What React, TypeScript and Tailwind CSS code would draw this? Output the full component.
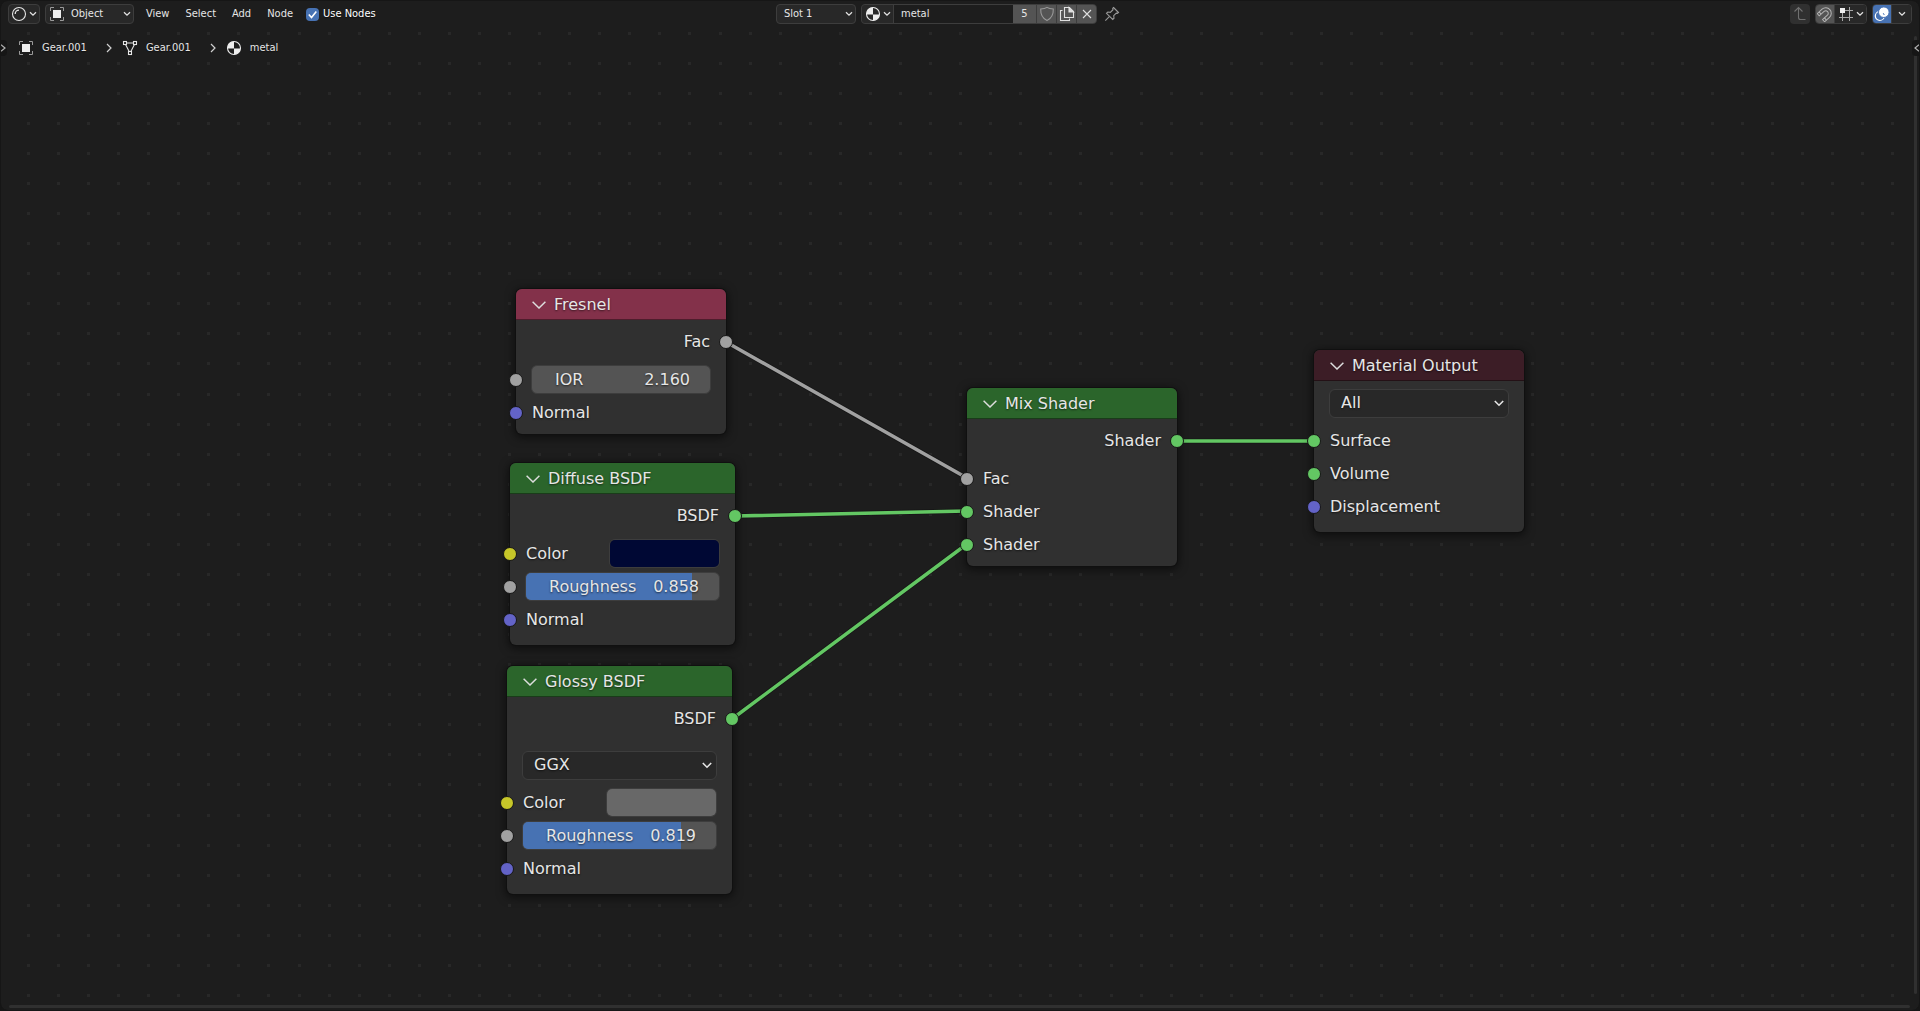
import { useState } from 'react';
import type { ReactNode } from 'react';

type SocketColor = 'gray' | 'green' | 'yellow' | 'blue';

const socketColors: Record<SocketColor, string> = {
  gray: 'bg-[#a1a1a1]',
  green: 'bg-[#63c763]',
  yellow: 'bg-[#c7c729]',
  blue: 'bg-[#6363c7]',
};

// Link endpoints in canvas space
const links = [
  { from: [726, 314], to: [967, 450], color: '#a1a1a1' },
  { from: [735, 488], to: [967, 483], color: '#63c763' },
  { from: [732, 691], to: [967, 516], color: '#63c763' },
  { from: [1177, 413], to: [1314, 413], color: '#63c763' },
];

// The grid step is not a whole number, so dots are snapped one by one
const GRID_STEP = 30.073;
const gridPath = (() => {
  let d = '';
  for (let row = 0; row < 72; row++) {
    for (let col = 0; col < 128; col++) {
      const x = Math.floor(27.38 + col * GRID_STEP);
      const y = Math.floor(4.16 + row * GRID_STEP);
      d += `M${x} ${y}h3v3h-3z`;
    }
  }
  return d;
})();

/* ---------- Icons ---------- */

function Chevron({ className = '' }: { className?: string }) {
  return (
    <svg viewBox="0 0 8 6" className={`h-[6px] w-2 shrink-0 ${className}`} fill="none" stroke="#e0e0e0" strokeWidth="1.3">
      <path d="M1 1.2l3 3 3-3" />
    </svg>
  );
}

function Crumb() {
  return (
    <svg viewBox="0 0 6 10" className="h-[10px] w-[6px] shrink-0" fill="none" stroke="#d0d0d0" strokeWidth="1.2">
      <path d="M1 1l4 4-4 4" />
    </svg>
  );
}

function ObjectIcon() {
  return (
    <svg viewBox="0 0 16 16" className="size-4 shrink-0" fill="none" stroke="#9a9a9a" strokeWidth="1">
      <path d="M1.5 5V1.5H5M11 1.5h3.500V5M14.500 11v3.500H11M5 14.500H1.500V11" />
      <rect x="4" y="4" width="8" height="8" fill="#eeeeee" stroke="none" />
    </svg>
  );
}

function ShaderEditorIcon() {
  return (
    <svg viewBox="0 0 16 16" className="size-4 shrink-0" fill="none" stroke="#e6e6e6">
      <circle cx="8" cy="8" r="6.500" strokeWidth="1.100" />
      <path d="M4.200 8A3.800 3.800 0 0 1 8 4.200" strokeWidth="1.300" />
    </svg>
  );
}

function MaterialIcon() {
  return (
    <svg viewBox="0 0 16 16" className="size-4 shrink-0">
      <circle cx="8" cy="8" r="6.500" fill="none" stroke="#eeeeee" strokeWidth="1.100" />
      <path d="M8 8.500V1.500A6.500 6.500 0 0 0 1.500 8.500z" fill="#eeeeee" />
      <path d="M8 8.500h6.500A6.500 6.500 0 0 1 8 14.500z" fill="#eeeeee" />
    </svg>
  );
}

function MeshIcon() {
  return (
    <svg viewBox="0 0 16 16" className="size-4 shrink-0" fill="none" stroke="#e6e6e6" strokeWidth="1.100">
      <path d="M4.500 3h7M3.700 4.800l3.300 6.400M12.300 4.800L9 11.200" />
      <rect x="1.500" y="1.500" width="3" height="3" />
      <rect x="11.500" y="1.500" width="3" height="3" />
      <rect x="6.500" y="11.500" width="3" height="3" />
    </svg>
  );
}

function ShieldIcon() {
  return (
    <svg viewBox="0 0 16 16" className="size-4 shrink-0" fill="none" stroke="#999999" strokeWidth="1.100">
      <path d="M8 1.400C6.500 2.500 4 3 1.700 3C1.500 8.500 3.500 12.300 8 14.600C12.500 12.300 14.500 8.500 14.300 3C12 3 9.500 2.500 8 1.400z" />
    </svg>
  );
}

function DuplicateIcon() {
  return (
    <svg viewBox="0 0 16 16" className="size-4 shrink-0" fill="none" stroke="#e0e0e0" strokeWidth="1.100">
      <path d="M5.500 1.500h5l4 4v6h-9z" />
      <path d="M10 1.500V6h4.500z" fill="#e0e0e0" />
      <path d="M3.500 4.500h-2v10h9v-2" />
    </svg>
  );
}

function CloseIcon() {
  return (
    <svg viewBox="0 0 16 16" className="size-4 shrink-0" fill="none" stroke="#e0e0e0" strokeWidth="1.100">
      <path d="M4 4l8 8M12 4l-8 8" />
    </svg>
  );
}

function PinIcon() {
  return (
    <svg viewBox="0 0 16 16" className="size-4 shrink-0" fill="none" stroke="#999999" strokeWidth="1.100">
      <path d="M9.500 1.500l5 5-1.200 .8-1-.2-2.600 2.600 .3 2.500-1.300 1.300-6.200-6.200 1.300-1.300 2.500 .3L9 3.700l-.3-1.200z" />
      <path d="M5.300 10.700L1.300 14.700" />
    </svg>
  );
}

function ParentIcon() {
  return (
    <svg viewBox="0 0 16 16" className="size-4 shrink-0" fill="none" stroke="#707070" strokeWidth="1.100">
      <path d="M2.500 5.500l4-4 4 4M6.500 1.500v10q0 2 2 2h5" />
    </svg>
  );
}

function MagnetIcon() {
  return (
    <svg viewBox="0 0 16 16" className="size-4 shrink-0" fill="none" stroke="#b5b5b5" strokeWidth="1">
      <g transform="rotate(48 8 8)">
        <path d="M2.500 13.500V7a5.500 5.500 0 0 1 11 0v6.500h-3V7a2.500 2.500 0 0 0-5 0v6.500z" />
        <path d="M2.500 11h3M10.500 11h3" />
      </g>
    </svg>
  );
}

function SnapGridIcon() {
  return (
    <svg viewBox="0 0 16 16" className="size-4 shrink-0" fill="none" stroke="#a8a8a8" strokeWidth="1">
      <path d="M4.500 7v8M11.500 1v14M7 4.500h8M1 11.500h14" />
      <rect x="2" y="2" width="5" height="5" fill="#eeeeee" stroke="none" />
    </svg>
  );
}

function OverlayIcon() {
  return (
    <svg viewBox="0 0 16 16" className="size-4 shrink-0">
      <circle cx="5.800" cy="10" r="4.500" fill="none" stroke="#ffffff" strokeWidth="1.200" />
      <circle cx="9.800" cy="6.200" r="5.300" fill="#ffffff" stroke="#4772b3" strokeWidth="1" />
      <path d="M9.200 7.200a4.500 4.500 0 0 1 1 1.800" fill="none" stroke="#4772b3" strokeWidth="1" />
    </svg>
  );
}

/* ---------- Node parts ---------- */

function Socket({ color, side = 'left' }: { color: SocketColor; side?: 'left' | 'right' }) {
  return (
    <span
      className={`absolute top-1/2 size-[14px] -translate-y-1/2 rounded-full border border-[#161616] ${
        side === 'left' ? '-left-[7px]' : '-right-[7px]'
      } ${socketColors[color]}`}
    />
  );
}

interface NodeProps {
  title: string;
  x: number;
  y: number;
  headerClass: string;
  className?: string;
  children: ReactNode;
}

function Node({ title, x, y, headerClass, className = '', children }: NodeProps) {
  return (
    <section
      style={{ left: x, top: y }}
      className={`absolute flex flex-col rounded-md bg-[#303030] text-base leading-5 text-[#e6e6e6] shadow-[0_0_0_1px_#101010,0_2px_8px_2px_rgba(0,0,0,0.5)] [text-shadow:0_1px_2px_rgba(0,0,0,0.6)] ${className}`}
    >
      <header className={`mb-[5px] flex h-[31px] items-center gap-2 rounded-t-md border-b border-black/40 pt-[2px] pl-4 ${headerClass}`}>
        <button type="button" aria-label={`Collapse ${title}`}>
          <svg viewBox="0 0 14 8" className="h-2 w-[14px]" fill="none" stroke="#dddddd" strokeWidth="1.500">
            <path d="M.6 .8L7 7 13.400 .8" />
          </svg>
        </button>
        <h2>{title}</h2>
      </header>
      {children}
    </section>
  );
}

function Output({ label, color }: { label: string; color: SocketColor }) {
  return (
    <div className="relative mb-1 flex h-[34px] items-center justify-end px-4">
      {label}
      <Socket color={color} side="right" />
    </div>
  );
}

function Input({ label, color }: { label: string; color: SocketColor }) {
  return (
    <div className="relative flex h-[33px] items-center px-4">
      <Socket color={color} />
      {label}
    </div>
  );
}

function NumberInput({ id, label, value }: { id: string; label: string; value: string }) {
  return (
    <div className="relative flex h-[33px] items-center px-[15px]">
      <Socket color="gray" />
      <div className="flex h-[29px] w-full items-center rounded-md border border-[#3d3d3d] bg-[#545454] pr-5 pl-[23px]">
        <label htmlFor={id}>{label}</label>
        <input id={id} defaultValue={value} className="w-0 flex-1 bg-transparent text-right outline-none [text-shadow:inherit]" />
      </div>
    </div>
  );
}

function SliderInput({ id, label, initial }: { id: string; label: string; initial: number }) {
  const [value, setValue] = useState(initial);

  return (
    <div className="relative flex h-[33px] items-center px-[15px]">
      <Socket color="gray" />
      <div className="relative h-[29px] w-full overflow-hidden rounded-md border border-[#3d3d3d] bg-[#545454]">
        <div className="h-full bg-[#4772b3]" style={{ width: `${value * 100}%` }} />
        <div className="absolute inset-0 flex items-center justify-between pr-5 pl-[23px]">
          <label htmlFor={id}>{label}</label>
          <output htmlFor={id}>{value.toFixed(3)}</output>
        </div>
        <input
          id={id}
          type="range"
          min={0}
          max={1}
          step={0.001}
          value={value}
          onChange={(e) => setValue(Number(e.target.value))}
          className="absolute inset-0 size-full opacity-0"
        />
      </div>
    </div>
  );
}

function ColorInput({ id, value }: { id: string; value: string }) {
  return (
    <div className="relative flex h-[33px] items-center justify-between pr-[15px] pl-4">
      <Socket color="yellow" />
      <label htmlFor={id}>Color</label>
      <input
        id={id}
        type="color"
        defaultValue={value}
        className="h-[29px] w-[111px] appearance-none overflow-hidden rounded-md border border-[#3d3d3d] bg-transparent p-0 [&::-webkit-color-swatch]:border-0 [&::-webkit-color-swatch-wrapper]:p-0"
      />
    </div>
  );
}

function NodeSelect({ label, options }: { label: string; options: string[] }) {
  return (
    <div className="relative mb-1 flex h-[34px] items-center px-[15px]">
      <select
        aria-label={label}
        className="h-[29px] w-full appearance-none rounded-md border border-[#3d3d3d] bg-[#282828] px-[11px] outline-none [text-shadow:inherit]"
      >
        {options.map((o) => (
          <option key={o}>{o}</option>
        ))}
      </select>
      <svg viewBox="0 0 10 7" className="pointer-events-none absolute right-5 h-[7px] w-[10px]" fill="none" stroke="#e6e6e6" strokeWidth="1.600">
        <path d="M.8 1L5 5.200 9.200 1" />
      </svg>
    </div>
  );
}

/* ---------- Editor ---------- */

function TopBar() {
  return (
    <header className="mb-px flex h-[26px] items-center px-[7px]">
      <div className="flex flex-1 items-center">
        <button type="button" aria-label="Editor type" className="flex h-5 w-8 items-center justify-center gap-[2px] rounded border border-[#3d3d3d] bg-[#282828]">
          <ShaderEditorIcon />
          <Chevron />
        </button>
        <div className="relative ml-[5px] flex items-center">
          <span className="pointer-events-none absolute left-1">
            <ObjectIcon />
          </span>
          <select aria-label="Shader type" className="h-5 w-[89px] appearance-none rounded border border-[#3d3d3d] bg-[#282828] pl-[25px] outline-none">
            <option>Object</option>
            <option>World</option>
            <option>Line Style</option>
          </select>
          <Chevron className="pointer-events-none absolute right-[3px]" />
        </div>
        <nav className="ml-3 flex gap-4">
          <button type="button">View</button>
          <button type="button">Select</button>
          <button type="button">Add</button>
          <button type="button">Node</button>
        </nav>
        <label className="ml-[13px] flex items-center gap-1 text-white">
          <span className="relative flex size-[13px]">
            <input type="checkbox" defaultChecked className="peer size-[13px] appearance-none rounded-sm bg-[#545454] checked:bg-[#4772b3]" />
            <svg viewBox="0 0 13 13" className="pointer-events-none absolute inset-0 hidden size-[13px] peer-checked:block" fill="none" stroke="#ffffff" strokeWidth="1.600">
              <path d="M2.800 6.500l2.700 3L10.300 3.500" />
            </svg>
          </span>
          Use Nodes
        </label>
      </div>

      <div className="flex items-center pr-6">
        <div className="relative flex items-center">
          <select aria-label="Slot" className="h-5 w-20 appearance-none rounded border border-[#3d3d3d] bg-[#282828] pl-[7px] outline-none">
            <option>Slot 1</option>
            <option>Slot 2</option>
          </select>
          <Chevron className="pointer-events-none absolute right-[3px]" />
        </div>
        <div className="ml-[5px] flex h-5 items-stretch overflow-hidden rounded border border-[#3d3d3d] bg-[#3d3d3d]">
          <button type="button" aria-label="Browse material" className="flex w-[31px] items-center justify-center gap-[2px] bg-[#282828]">
            <MaterialIcon />
            <Chevron />
          </button>
          <input aria-label="Material name" defaultValue="metal" className="ml-px w-[119px] bg-[#1d1d1d] pl-[7px] outline-none" />
          <button type="button" aria-label="Users" className="mr-px w-[23px] bg-[#545454]">5</button>
          <button type="button" aria-label="Fake user" className="mr-px flex w-[19px] items-center justify-center bg-[#545454]">
            <ShieldIcon />
          </button>
          <button type="button" aria-label="New material" className="mr-px flex w-[19px] items-center justify-center bg-[#545454]">
            <DuplicateIcon />
          </button>
          <button type="button" aria-label="Unlink" className="flex w-[19px] items-center justify-center bg-[#545454]">
            <CloseIcon />
          </button>
        </div>
        <button type="button" aria-label="Pin" className="ml-[7px]">
          <PinIcon />
        </button>
      </div>

      <div className="flex flex-1 items-center justify-end gap-[5px]">
        <button type="button" aria-label="Parent node tree" className="flex size-5 items-center justify-center rounded bg-[#303030]">
          <ParentIcon />
        </button>
        <div className="flex h-5 overflow-hidden rounded border border-[#3d3d3d]">
          <button type="button" aria-label="Snap" className="flex w-[18px] items-center justify-center bg-[#545454]">
            <MagnetIcon />
          </button>
          <button type="button" aria-label="Snap to" className="flex w-8 items-center justify-center gap-[2px] border-l border-[#3d3d3d] bg-[#282828]">
            <SnapGridIcon />
            <Chevron />
          </button>
        </div>
        <div className="flex h-5 overflow-hidden rounded border border-[#3d3d3d]">
          <button type="button" aria-label="Show overlays" className="flex w-[18px] items-center justify-center bg-[#4772b3]">
            <OverlayIcon />
          </button>
          <button type="button" aria-label="Overlay options" className="flex w-5 items-center justify-center border-l border-[#3d3d3d] bg-[#282828]">
            <Chevron />
          </button>
        </div>
      </div>
    </header>
  );
}

function Breadcrumbs() {
  return (
    <nav aria-label="Context path" className="relative flex h-10 items-center pl-[18px]">
      <a href="#object" className="flex items-center gap-2">
        <ObjectIcon />
        Gear.001
      </a>
      <span className="mr-[10px] ml-[19px]">
        <Crumb />
      </span>
      <a href="#mesh" className="flex items-center gap-2">
        <MeshIcon />
        Gear.001
      </a>
      <span className="mr-[10px] ml-[19px]">
        <Crumb />
      </span>
      <a href="#material" className="flex items-center gap-2">
        <MaterialIcon />
        metal
      </a>
    </nav>
  );
}

export default function App() {
  return (
    <div className="h-screen overflow-hidden bg-[#161616] font-['DejaVu_Sans_Condensed','DejaVu_Sans',sans-serif] text-[11px] leading-4 text-[#e6e6e6]">
      <div className="flex h-full flex-col overflow-hidden rounded-lg border border-[#161616] bg-[#1d1d1d] [text-shadow:0_1px_1px_rgba(0,0,0,0.5)]">
        <TopBar />

        <main className="relative -mx-px flex-1 overflow-hidden">
          <svg className="absolute inset-0 size-full" aria-hidden="true">
            <path d={gridPath} fill="#282828" shapeRendering="crispEdges" />
            {links.map((l, i) => (
              <g key={i} strokeLinecap="round">
                <line x1={l.from[0]} y1={l.from[1]} x2={l.to[0]} y2={l.to[1]} stroke="#161616" strokeWidth="5" />
                <line x1={l.from[0]} y1={l.from[1]} x2={l.to[0]} y2={l.to[1]} stroke={l.color} strokeWidth="3.5" />
              </g>
            ))}
          </svg>

          <Breadcrumbs />

          {/* Region toggles */}
          <button type="button" aria-label="Show toolbar" className="absolute top-3 left-0 flex h-4 w-[7px] items-center rounded-r bg-[#161616]">
            <svg viewBox="0 0 6 8" className="h-2 w-[6px]" fill="none" stroke="#b0b0b0" strokeWidth="1.200">
              <path d="M1 .8L5 4 1 7.200" />
            </svg>
          </button>

          {/* Scroll bars */}
          <div className="absolute top-2 right-[3px] bottom-4 w-[3px] rounded-full bg-[#303030]" />
          <div className="absolute right-[10px] bottom-[2px] left-[9px] h-[3px] rounded-full bg-[#303030]" />

          <button type="button" aria-label="Show sidebar" className="absolute top-3 right-0 flex h-4 w-2 items-center justify-end rounded-l bg-[#161616]">
            <svg viewBox="0 0 6 8" className="h-2 w-[6px]" fill="none" stroke="#b0b0b0" strokeWidth="1.200">
              <path d="M5 .8L1 4l4 3.200" />
            </svg>
          </button>

          <div className="font-['DejaVu_Sans',sans-serif]">
            <Node title="Fresnel" x={516} y={261} headerClass="bg-[#83314a]" className="w-[210px] pb-[5px]">
              <Output label="Fac" color="gray" />
              <NumberInput id="ior" label="IOR" value="2.160" />
              <Input label="Normal" color="blue" />
            </Node>

            <Node title="Diffuse BSDF" x={510} y={435} headerClass="bg-[#2b652b]" className="w-[225px] pb-[9px]">
              <Output label="BSDF" color="green" />
              <ColorInput id="diffuse-color" value="#000834" />
              <SliderInput id="diffuse-roughness" label="Roughness" initial={0.858} />
              <Input label="Normal" color="blue" />
            </Node>

            <Node title="Glossy BSDF" x={507} y={638} headerClass="bg-[#2b652b]" className="w-[225px] pb-[9px]">
              <Output label="BSDF" color="green" />
              <div className="mt-2">
                <NodeSelect label="Distribution" options={['GGX', 'Sharp', 'Beckmann', 'Ashikhmin-Shirley', 'Multiscatter GGX']} />
              </div>
              <ColorInput id="glossy-color" value="#686868" />
              <SliderInput id="glossy-roughness" label="Roughness" initial={0.819} />
              <Input label="Normal" color="blue" />
            </Node>

            <Node title="Mix Shader" x={967} y={360} headerClass="bg-[#2b652b]" className="w-[210px] pb-[5px]">
              <Output label="Shader" color="green" />
              <Input label="Fac" color="gray" />
              <Input label="Shader" color="green" />
              <Input label="Shader" color="green" />
            </Node>

            <Node title="Material Output" x={1314} y={322} headerClass="bg-[#3c1d26]" className="w-[210px] pb-[9px]">
              <NodeSelect label="Target" options={['All', 'Eevee', 'Cycles']} />
              <Input label="Surface" color="green" />
              <Input label="Volume" color="green" />
              <Input label="Displacement" color="blue" />
            </Node>
          </div>
        </main>
      </div>
    </div>
  );
}
